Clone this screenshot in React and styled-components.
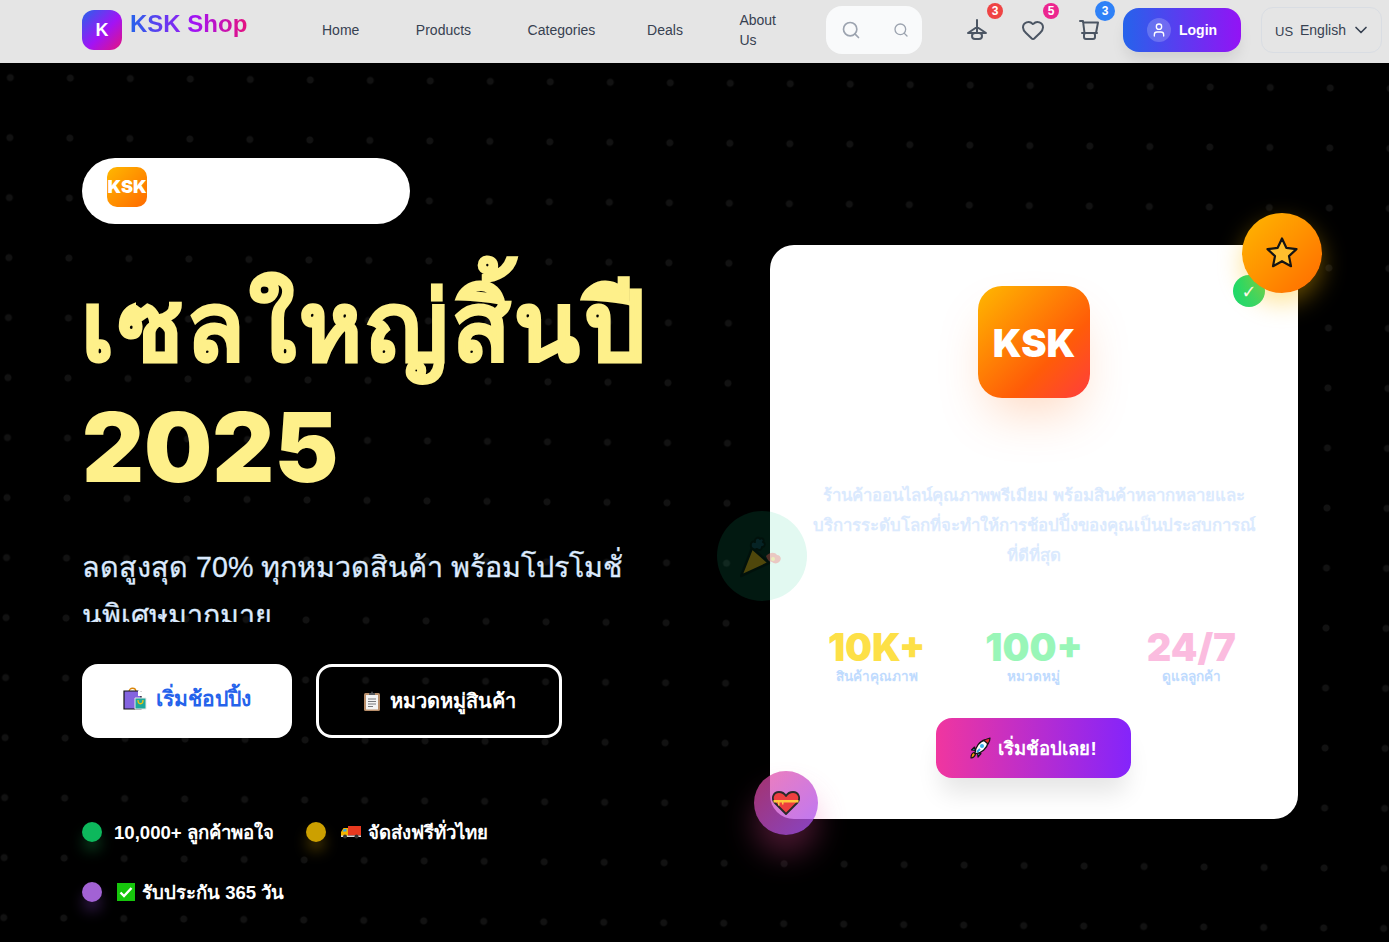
import React from 'react'
import styled, { createGlobalStyle } from 'styled-components'
import { Search, Heart, ChevronDown, User } from 'lucide-react'

const GlobalStyle = createGlobalStyle`
  html, body {
    margin: 0;
    padding: 0;
    background: #000;
  }
  body {
    font-family: "Liberation Sans", "Inter", sans-serif;
    overflow: hidden;
  }
  * {
    box-sizing: border-box;
  }
`

const Page = styled.div`
  width: 1389px;
  height: 942px;
  overflow: hidden;
`

const Nav = styled.nav`
  height: 63px;
  background: #e5e5e5;
  display: flex;
  align-items: center;
  padding: 0 7px 3px 82px;
`

const Brand = styled.div`
  display: flex;
  align-items: flex-start;
  gap: 8px;
  width: 240px;
  height: 40px;
`

const BrandMark = styled.div`
  width: 40px;
  height: 40px;
  border-radius: 12px;
  background: linear-gradient(135deg, #2563eb, #a213f5 55%, #e5127f);
  color: #fff;
  font-size: 18px;
  font-weight: 700;
  display: flex;
  align-items: center;
  justify-content: center;
`

const BrandName = styled.span`
  font-size: 24px;
  font-weight: 700;
  line-height: 28px;
  background: linear-gradient(90deg, #2563eb, #a213f5 55%, #e5127f);
  -webkit-background-clip: text;
  background-clip: text;
  color: transparent;
`

const Links = styled.div`
  display: flex;
  align-items: center;
  width: 504px;
  gap: 56.5px;
`

const NavLink = styled.a`
  font-size: 14px;
  line-height: 20px;
  color: #374151;
  width: ${(p) => p.$width || 'auto'};
`

const SearchBox = styled.div`
  width: 96px;
  height: 48px;
  border-radius: 16px;
  background: #f9fafb;
  color: #9ca3af;
  display: flex;
  align-items: center;
  justify-content: space-between;
  padding: 0 13px 0 15px;
`

const IconRow = styled.div`
  display: flex;
  align-items: center;
  gap: 32px;
  margin-left: 43px;
  color: #4b5563;
`

const IconButton = styled.div`
  position: relative;
  width: 24px;
  height: 24px;
`

const Badge = styled.span`
  position: absolute;
  top: ${(p) => p.$top}px;
  right: -14px;
  width: ${(p) => p.$size}px;
  height: ${(p) => p.$size}px;
  border-radius: 50%;
  background: ${(p) => p.$bg};
  color: #fff;
  font-size: 12px;
  font-weight: 700;
  display: flex;
  align-items: center;
  justify-content: center;
`

const LoginButton = styled.button`
  width: 118px;
  height: 44px;
  margin-left: 22px;
  border: 0;
  border-radius: 16px;
  background: linear-gradient(90deg, #2563eb, #9313f5);
  box-shadow: 0 10px 15px -3px rgba(0, 0, 0, 0.1);
  color: #fff;
  font: 700 14px "Liberation Sans", sans-serif;
  display: flex;
  align-items: center;
  gap: 8px;
  padding: 0 0 0 24px;
`

const Avatar = styled.span`
  width: 24px;
  height: 24px;
  border-radius: 50%;
  background: rgba(255, 255, 255, 0.2);
  display: flex;
  align-items: center;
  justify-content: center;
`

const LangSelect = styled.div`
  width: 121px;
  height: 46px;
  margin-left: 20px;
  border: 1px solid #d9dde3;
  border-radius: 12px;
  color: #374151;
  font-size: 14px;
  display: flex;
  align-items: center;
  padding: 0 0 0 13px;
`

const Flag = styled.span`
  font-size: 13px;
  width: 25px;
  padding-top: 2px;
`

const LangName = styled.span`
  width: 51px;
`

const Hero = styled.main`
  height: 879px;
  background: #000;
  display: flex;
  padding: 95px 91px 0 82px;
  position: relative;
  overflow: hidden;

  &::before {
    content: '';
    position: absolute;
    inset: -40px;
    transform: rotate(0.45deg);
    background-image: radial-gradient(circle, #121212 3px, transparent 4px);
    background-size: 60px 60px;
    background-position: 17px 30px;
  }
`

const Left = styled.section`
  position: relative;
  width: 560px;
  display: flex;
  flex-direction: column;
  align-items: flex-start;
`

const Pill = styled.div`
  width: 328px;
  height: 66px;
  border-radius: 33px;
  background: #fff;
  padding: 9px 25px;
`

const PillLogo = styled.div`
  width: 40px;
  height: 40px;
  border-radius: 10px;
  background: linear-gradient(135deg, #ffb800, #ff6a00);
  color: #fff;
  font: 900 18px/40px "Inter", "Liberation Sans", sans-serif;
  text-align: center;
`

const Title = styled.h1`
  margin: 43px 0 0;
  color: #fef08a;
  width: 600px;
  white-space: nowrap;
`

const TitleThai = styled.span`
  display: block;
  margin-left: -1px;
  font: 900 96px/120px "Liberation Sans", sans-serif;
  letter-spacing: 3.6px;
  -webkit-text-stroke: 2px #fef08a;
`

const TitleYear = styled.span`
  display: block;
  font: 900 96px/120px "Inter", "Liberation Sans", sans-serif;
`

const Sub = styled.p`
  margin: 36px 0 0;
  width: 580px;
  height: 79px;
  overflow: hidden;
  font-size: 28.7px;
  font-weight: 500;
  line-height: 48px;
  color: #dbeafe;
  -webkit-text-stroke: 0.3px #dbeafe;
`

const Buttons = styled.div`
  display: flex;
  gap: 24px;
  margin-top: 42px;
`

const HeroButton = styled.button`
  height: 74px;
  width: ${(p) => p.$width}px;
  border-radius: 16px;
  border: ${(p) => (p.$outline ? '3px solid #fff' : '0')};
  background: ${(p) => (p.$outline ? 'transparent' : '#fff')};
  color: ${(p) => (p.$outline ? '#fff' : '#2563eb')};
  font: 700 ${(p) => (p.$outline ? '20px' : '21px')} "Liberation Sans", sans-serif;
  display: flex;
  align-items: center;
  justify-content: center;
  gap: 9px;
  padding: 0 0 ${(p) => (p.$outline ? '0' : '6px')};
`

const Perks = styled.div`
  display: flex;
  flex-wrap: wrap;
  gap: 40px 32px;
  margin-top: 84px;
  width: 500px;
`

const Perk = styled.div`
  display: flex;
  align-items: center;
  height: 20px;
  color: #fff;
  font-size: 18.6px;
  font-weight: 700;
`

const Dot = styled.span`
  width: 20px;
  height: 20px;
  margin-right: 12px;
  border-radius: 50%;
  background: ${(p) => p.$color};
  box-shadow: 0 10px 15px -3px ${(p) => p.$glow};
`

const PerkIcon = styled.span`
  display: flex;
  margin: 0 7px 0 3px;
`

const Card = styled.section`
  position: absolute;
  left: 770px;
  top: 182px;
  width: 528px;
  height: 574px;
  border-radius: 24px;
  background: #fff;
  display: flex;
  flex-direction: column;
  align-items: center;
  padding-top: 41px;
`

const CardLogo = styled.div`
  width: 112px;
  height: 112px;
  border-radius: 24px;
  background: linear-gradient(135deg, #ffb800, #ff5c08 65%, #ff3d3d);
  box-shadow: 0 25px 50px -12px rgba(255, 100, 0, 0.25);
  color: #fff;
  font: 900 38px/114px "Inter", "Liberation Sans", sans-serif;
  text-align: center;
`

const CardText = styled.p`
  margin: 83px 0 0;
  width: 470px;
  text-align: center;
  color: #dbeafe;
  font-size: 16.8px;
  font-weight: 700;
  line-height: 30px;
`

const Stats = styled.div`
  display: grid;
  grid-template-columns: repeat(3, 1fr);
  width: 472px;
  margin-top: 56px;
`

const Stat = styled.div`
  text-align: center;
`

const StatValue = styled.div`
  font: 900 38px/40px "Inter", "Liberation Sans", sans-serif;
  color: ${(p) => p.$color};
`

const StatLabel = styled.div`
  font-size: 13.5px;
  line-height: 20px;
  font-weight: 700;
  color: #bfdbfe;
`

const ShopButton = styled.button`
  margin: 31px 1px 0 0;
  width: 195px;
  height: 60px;
  border: 0;
  border-radius: 16px;
  background: linear-gradient(90deg, #f0369f, #8424fb);
  box-shadow: 0 20px 25px -5px rgba(0, 0, 0, 0.1);
  color: #fff;
  font: 700 18.5px "Liberation Sans", sans-serif;
  display: flex;
  align-items: center;
  justify-content: center;
  gap: 7px;
`

const Float = styled.div`
  position: absolute;
  left: ${(p) => p.$left}px;
  top: ${(p) => p.$top}px;
  width: ${(p) => p.$size}px;
  height: ${(p) => p.$size}px;
  border-radius: 50%;
  display: flex;
  align-items: center;
  justify-content: center;
  background: ${(p) => p.$bg};
  box-shadow: ${(p) => p.$shadow || 'none'};
  color: #fff;
  font-size: 18px;
  font-family: "DejaVu Sans", sans-serif;
`

const BellIcon = () => (
  <svg width="24" height="24" viewBox="0 0 24 24" fill="none" stroke="currentColor" strokeWidth="2" strokeLinejoin="round" strokeLinecap="round">
    <path d="M12 2v13M3 15l9-6 9 6z" />
    <rect x="7" y="15" width="10" height="6" rx="3" />
  </svg>
)

const CartIcon = () => (
  <svg width="24" height="24" viewBox="0 0 24 24" fill="none" stroke="currentColor" strokeWidth="2" strokeLinejoin="round" strokeLinecap="round">
    <path d="M3 3h3l1.500 12M6 4.500h15l-2 10.500" />
    <path d="M5 15h15" />
    <rect x="7" y="15" width="11" height="6" rx="2" />
  </svg>
)

const ink = '#141414'

const BagEmoji = () => (
  <svg width="24" height="24" viewBox="0 0 24 24">
    <path d="M6 6C6 1 13 1 13 6" fill="none" stroke="#d9860b" strokeWidth="1.300" />
    <path d="M1 5h14l3 1v17H1z" fill="#8464e0" stroke={ink} strokeWidth="1.200" />
    <path d="M12 12h11v11H12z" fill="#1fa89a" stroke="#e8e8e8" strokeWidth="1" />
    <path d="M15 14c0 5 5 5 5 0" fill="none" stroke="#f4c20d" strokeWidth="1.300" />
    <path d="M15 5l2-2 1 3 2-2 1 6h-6z" fill="#fff" />
  </svg>
)

const ClipboardEmoji = () => (
  <svg width="18" height="20" viewBox="0 0 18 20">
    <rect x="1" y="2" width="16" height="18" rx="1.500" fill="#b98f6b" />
    <rect x="3" y="4" width="12" height="14.500" fill="#f4f4f4" />
    <path d="M5 8h8M5 10.500h8M5 13h8M5 15.500h5" stroke="#77797c" strokeWidth="1" />
    <path d="M6 4V2h2l1-2 1 2h2v2z" fill="#55585c" />
  </svg>
)

const TruckEmoji = () => (
  <svg width="20" height="13" viewBox="0 0 20 13">
    <rect x="7" y="0" width="13" height="9.500" fill="#e8391f" />
    <path d="M0 10V6l2.500-4H7v8z" fill="#f4b400" />
    <path d="M1.500 5.500l1.500-2.500h2.500v2.500z" fill="#38a8e8" />
    <rect x="0" y="9.500" width="20" height="1.500" fill="#d8d8d8" />
    <circle cx="4" cy="10.500" r="2" fill="#333" />
    <circle cx="15.500" cy="10.500" r="2" fill="#333" />
  </svg>
)

const CheckEmoji = () => (
  <svg width="18" height="18" viewBox="0 0 18 18">
    <rect width="18" height="18" fill="#16c60c" />
    <path d="M3.500 9.500l3.500 3.500 7.500-8" fill="none" stroke="#fff" strokeWidth="2.400" />
  </svg>
)

const RocketEmoji = () => (
  <svg width="21" height="22" viewBox="0 0 21 22" strokeLinejoin="round">
    <path d="M1 21c0-3 1-5 3-5.500l1.500 1.500C5 19 4 20.500 1 21z" fill="#f59e0b" stroke={ink} strokeWidth="1.200" />
    <path d="M4.500 10L1.500 13l4 .5zM11 16.500L8 20l-.5-4z" fill="#2aa5e0" stroke={ink} strokeWidth="1.200" />
    <path d="M5 16.500C5 10 10 4 15 3l3 3c-1 5-6.500 11-13 10.500z" fill="#fff" stroke={ink} strokeWidth="1.300" />
    <path d="M14 3.500C16 2 18 1.500 20 1c0 2-.5 4-2 6z" fill="#e32b2b" stroke={ink} strokeWidth="1.200" />
    <circle cx="12" cy="9" r="2" fill="#39b0ea" />
    <path d="M7 15l3-3" stroke="#2aa5e0" strokeWidth="2" />
  </svg>
)

const StarEmoji = () => (
  <svg width="34" height="34" viewBox="0 0 34 34">
    <path d="M17 2.500l4.300 9.300 10.200 1.300-7.500 7 2 10.100-9-5-9 5 2-10.100-7.500-7 10.200-1.300z" fill="#ffbe2e" stroke={ink} strokeWidth="2.200" strokeLinejoin="round" />
  </svg>
)

const PopperEmoji = () => (
  <svg width="44" height="44" viewBox="0 0 44 44" opacity="0.3" strokeLinejoin="round">
    <path d="M1 42L12 14l17 15z" fill="#ffb000" stroke="#000" strokeWidth="2.500" />
    <path d="M11 13c-1-5 2-6 4-5-1-3 3-6 5-3 2-2 5 1 3 3 3 1 2 5-1 5 0 3-3 4-5 2-2 1-5 0-6-2z" fill="#103a55" stroke="#000" strokeWidth="2" />
    <path d="M26 22c4-4 9-4 11-1 3 0 5 3 3 6-2 3-6 3-8 1-3 0-5-3-6-6z" fill="#ff5b5b" />
    <circle cx="33" cy="25" r="2" fill="#ffd23f" />
  </svg>
)

const HeartEmoji = () => (
  <svg width="28" height="24" viewBox="0 0 28 24">
    <path d="M14 23L2.500 11.500C-1 7 1.500 1 7 1c3 0 5.500 1.500 7 4 1.500-2.500 4-4 7-4 5.500 0 8 6 4.500 10.500z" fill="#ed3f3f" stroke="#2a2a2a" strokeWidth="1.800" strokeLinejoin="round" />
    <path d="M1.500 9h25v2.500h-25zM6 11h1.500v3.500H6zM10 11h1.500v2.500H10z" fill="#ffc83d" />
  </svg>
)

const App = () => (
  <Page>
    <GlobalStyle />
    <Nav>
      <Brand>
        <BrandMark>K</BrandMark>
        <BrandName>KSK Shop</BrandName>
      </Brand>
      <Links>
        <NavLink>Home</NavLink>
        <NavLink>Products</NavLink>
        <NavLink $width="63px">Categories</NavLink>
        <NavLink>Deals</NavLink>
        <NavLink $width="40px">About Us</NavLink>
      </Links>
      <SearchBox>
        <Search size={20} />
        <Search size={16} />
      </SearchBox>
      <IconRow>
        <IconButton>
          <BellIcon />
          <Badge $bg="#ef4444" $size={16} $top={-15}>3</Badge>
        </IconButton>
        <IconButton>
          <Heart size={24} />
          <Badge $bg="#ec268f" $size={16} $top={-15}>5</Badge>
        </IconButton>
        <IconButton>
          <CartIcon />
          <Badge $bg="#2f81f7" $size={20} $top={-17}>3</Badge>
        </IconButton>
      </IconRow>
      <LoginButton>
        <Avatar><User size={16} /></Avatar>
        Login
      </LoginButton>
      <LangSelect>
        <Flag>US</Flag>
        <LangName>English</LangName>
        <ChevronDown size={20} />
      </LangSelect>
    </Nav>
    <Hero>
      <Left>
        <Pill>
          <PillLogo>KSK</PillLogo>
        </Pill>
        <Title>
          <TitleThai>เซลใหญ่สิ้นปี</TitleThai>
          <TitleYear>2025</TitleYear>
        </Title>
        <Sub>ลดสูงสุด 70% ทุกหมวดสินค้า พร้อมโปรโมชั่<br />นพิเศษมากมาย</Sub>
        <Buttons>
          <HeroButton $width={210}><BagEmoji />เริ่มช้อปปิ้ง</HeroButton>
          <HeroButton $width={246} $outline><ClipboardEmoji />หมวดหมู่สินค้า</HeroButton>
        </Buttons>
        <Perks>
          <Perk><Dot $color="#0db85c" $glow="rgba(34,197,94,0.5)" />10,000+ ลูกค้าพอใจ</Perk>
          <Perk><Dot $color="#cca000" $glow="rgba(234,179,8,0.5)" /><PerkIcon><TruckEmoji /></PerkIcon>จัดส่งฟรีทั่วไทย</Perk>
          <Perk><Dot $color="#a262d4" $glow="rgba(168,85,247,0.5)" /><PerkIcon><CheckEmoji /></PerkIcon>รับประกัน 365 วัน</Perk>
        </Perks>
      </Left>
      <Card>
        <CardLogo>KSK</CardLogo>
        <CardText>ร้านค้าออนไลน์คุณภาพพรีเมียม พร้อมสินค้าหลากหลายและ<br />บริการระดับโลกที่จะทำให้การช้อปปิ้งของคุณเป็นประสบการณ์<br />ที่ดีที่สุด</CardText>
        <Stats>
          <Stat><StatValue $color="#fde047">10K+</StatValue><StatLabel>สินค้าคุณภาพ</StatLabel></Stat>
          <Stat><StatValue $color="#99f6b8">100+</StatValue><StatLabel>หมวดหมู่</StatLabel></Stat>
          <Stat><StatValue $color="#fbbcdf">24/7</StatValue><StatLabel>ดูแลลูกค้า</StatLabel></Stat>
        </Stats>
        <ShopButton><RocketEmoji />เริ่มช้อปเลย!</ShopButton>
      </Card>
      <Float $left={1233} $top={212} $size={32} $bg="linear-gradient(135deg,#10dc6c,#34d66a)">✓</Float>
      <Float $left={1242} $top={150} $size={80} $bg="linear-gradient(135deg,#ffb800,#ff6a00)" $shadow="0 10px 25px rgba(255,190,0,0.4)"><StarEmoji /></Float>
      <Float $left={717} $top={448} $size={90} $bg="rgba(20,205,140,0.12)"><PopperEmoji /></Float>
      <Float $left={754} $top={708} $size={64} $bg="linear-gradient(135deg,rgba(236,72,153,0.7),rgba(168,85,247,0.8))" $shadow="0 20px 30px rgba(236,72,153,0.3)"><HeartEmoji /></Float>
    </Hero>
  </Page>
)

export default App
